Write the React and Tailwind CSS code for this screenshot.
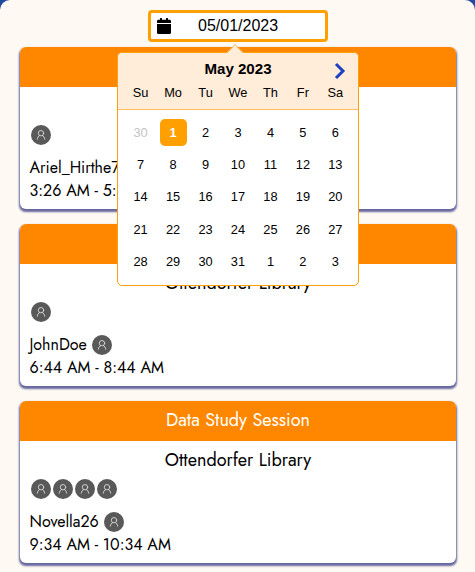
const weekdays = ['Su', 'Mo', 'Tu', 'We', 'Th', 'Fr', 'Sa'];

const days = [
  30, ...Array.from({ length: 31 }, (_, i) => i + 1), 1, 2, 3,
];

const sessions = [
  { title: '', place: '', members: 1, host: 'Ariel_Hirthe7', time: '3:26 AM - 5:26' },
  { title: '', place: 'Ottendorfer Library', members: 1, host: 'JohnDoe', time: '6:44 AM - 8:44 AM' },
  { title: 'Data Study Session', place: 'Ottendorfer Library', members: 4, host: 'Novella26', time: '9:34 AM - 10:34 AM' },
];

function Avatar() {
  return (
    <span className="flex size-5 shrink-0 items-center justify-center rounded-full bg-[#595959]">
      <svg className="size-5" viewBox="0 0 20 20" fill="none" stroke="#d8d8d8" strokeWidth="0.9" strokeLinecap="round">
        <circle cx="10" cy="8.2" r="2.7" />
        <path d="M8.6 10.5C7.3 11.3 6.5 12.4 6.3 14.2M11.4 10.5c1.3.8 2.1 1.9 2.3 3.7" />
      </svg>
    </span>
  );
}

function SessionCard({ session }) {
  return (
    <article className="h-[162px] shrink-0 overflow-hidden rounded-md bg-white shadow-[0_2px_2px_0.5px_#6868a0]">
      <h2 className="flex h-10 items-center justify-center bg-[#ff8700] pb-0.5 text-[18px] text-white">
        {session.title}
      </h2>
      <div className="flex flex-col px-[9.5px]">
        <p className="flex h-[38px] items-center justify-center text-[18px] text-black">{session.place}</p>
        <div className="flex h-5 gap-0.5 pl-[1.5px]">
          {Array.from({ length: session.members }, (_, i) => <Avatar key={i} />)}
        </div>
        <div className="mt-[13px] flex h-5 items-center gap-[5px] whitespace-nowrap text-[16px]">
          <span>{session.host}</span>
          <Avatar />
        </div>
        <p className="mt-px h-6 whitespace-nowrap text-[16px] leading-6">{session.time}</p>
      </div>
    </article>
  );
}

function Calendar() {
  return (
    <div className="absolute left-[117px] top-[52px] z-10 h-[234px] w-[242px] rounded-[5px] border border-[#ff9f0a] bg-white font-['Liberation_Sans',Arial,sans-serif] text-black">
      <svg className="absolute left-[107px] top-[-9px] h-[10px] w-5" viewBox="0 0 20 10" fill="none">
        <path d="M1 10 10 1l9 9Z" fill="#ffecd9" />
        <path d="M1 9.5 10 .5l9 9" stroke="#ffb84d" />
      </svg>
      <div className="relative h-[57px] rounded-t-[4px] border-b border-[#ffbd59] bg-[#ffecd9] pt-[7px]">
        <div className="text-center text-[15.1px] leading-[18px] font-bold">May 2023</div>
        <svg className="absolute right-[12px] top-[9px] h-[18px] w-3" viewBox="0 0 12 18" fill="none" stroke="#1d3fc4" strokeWidth="3">
          <path d="m2 2 7 7-7 7" />
        </svg>
        <div className="mt-[5px] grid grid-cols-7 px-[6.4px] text-center text-[12.8px] leading-5">
          {weekdays.map((day) => <span key={day}>{day}</span>)}
        </div>
      </div>
      <div className="mt-[6px] grid auto-rows-[32.4px] grid-cols-7 items-center justify-items-center px-[6.4px] text-[12.8px]">
        {days.map((day, i) => (
          <span
            key={i}
            className={`flex size-[27px] items-center justify-center rounded-[5px] ${i === 0 ? 'text-[#c4c4c4]' : i === 1 ? 'bg-[#ff9f00] font-bold text-white' : ''}`}
          >
            {day}
          </span>
        ))}
      </div>
    </div>
  );
}

export default function App() {
  return (
    <div className="h-[572px] w-[475px] overflow-hidden bg-[#1f4aa0]">
      <main className="relative flex h-full flex-col overflow-hidden rounded-t-[10px] bg-[#fef9f2] pt-2.5 font-[Jost,Lato,sans-serif] text-black">
        <div className="ml-[148px] flex h-8 w-[180px] shrink-0 items-center rounded-[4px] border-[3px] border-[#ff9f00] bg-white font-['Liberation_Sans',Arial,sans-serif]">
          <svg className="ml-[6px] h-4 w-[14px]" viewBox="0 0 14 16" fill="#000">
            <path d="M0 5V3.2C0 2.4.6 1.8 1.4 1.8H3V.5Q3 0 3.5 0h1Q5 0 5 .5v1.3h4V.5Q9 0 9.5 0h1Q11 0 11 .5v1.3h1.6c.8 0 1.4.6 1.4 1.4V5ZM0 6h14v8.5c0 .8-.6 1.5-1.4 1.5H1.4C.6 16 0 15.3 0 14.5Z" />
          </svg>
          <span className="ml-[27px] text-[16px]">05/01/2023</span>
        </div>
        <Calendar />
        <section className="mx-5 mt-[5px] flex w-[436px] flex-col gap-[15px]">
          {sessions.map((session) => <SessionCard key={session.host} session={session} />)}
        </section>
      </main>
    </div>
  );
}
